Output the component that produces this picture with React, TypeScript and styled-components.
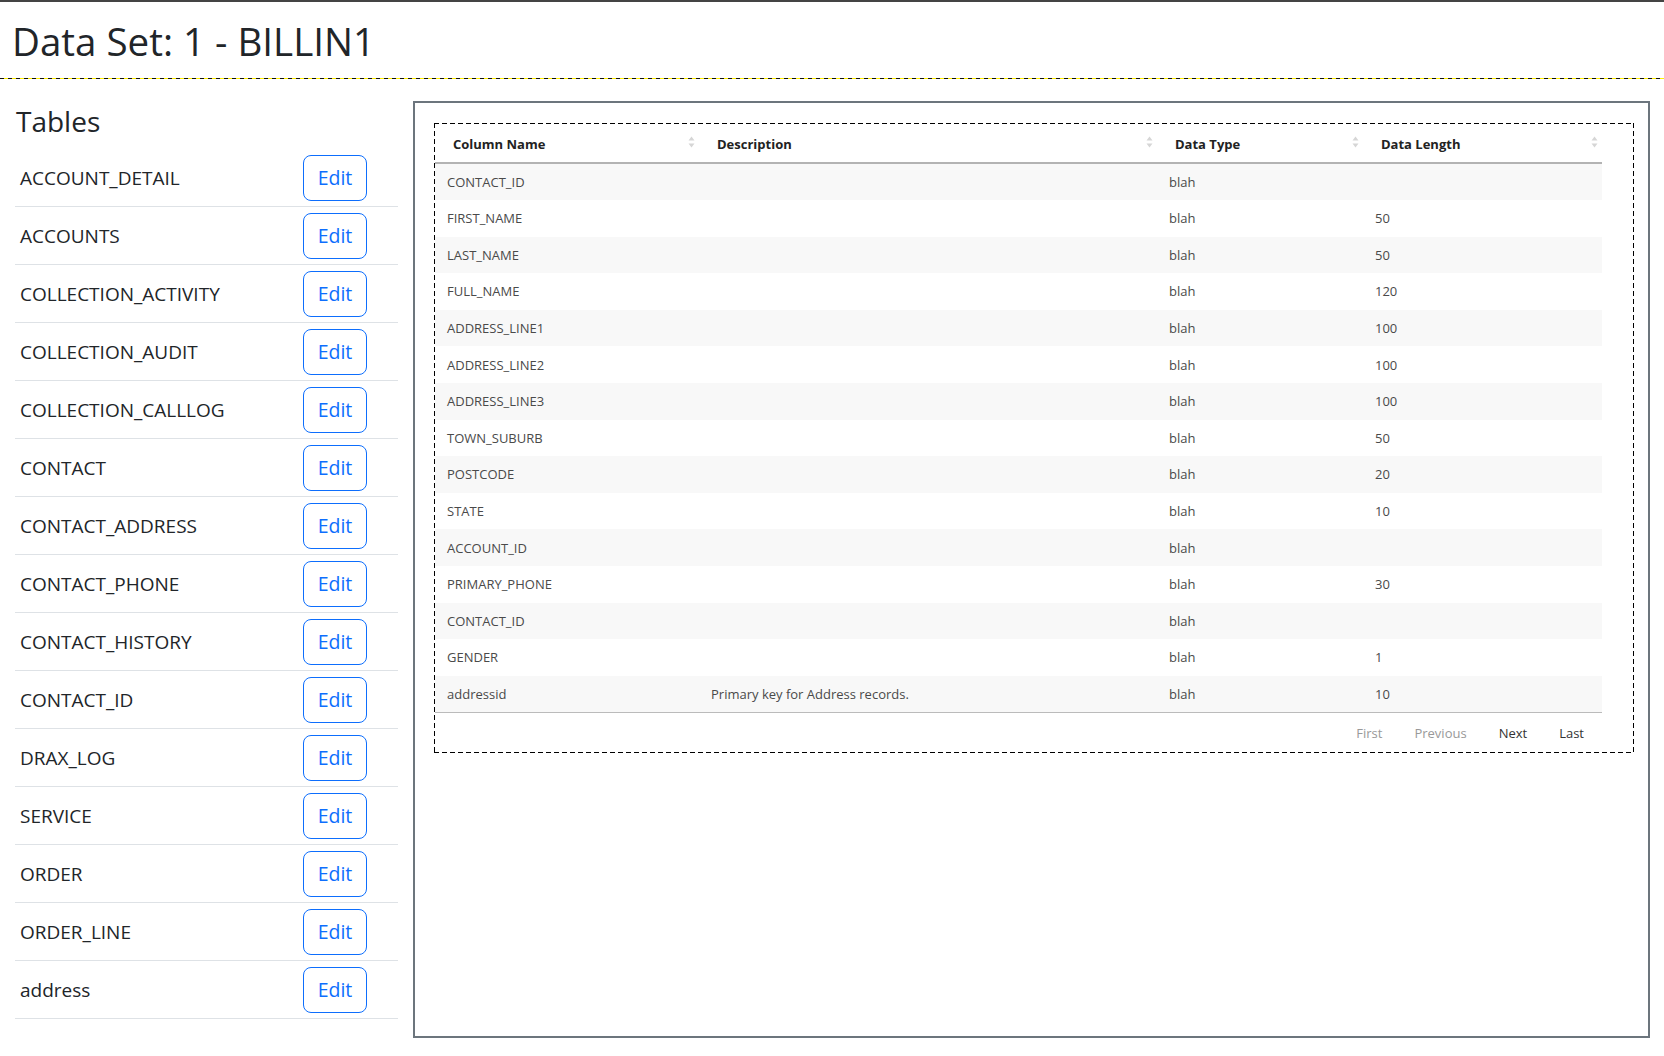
import React from 'react'
import styled, { createGlobalStyle } from 'styled-components'

const GlobalStyle = createGlobalStyle`
  html, body {
    margin: 0;
    padding: 0;
    background: #fff;
  }
  body {
    font-family: "Open Sans", "Noto Sans", sans-serif;
    color: #212529;
  }
  * {
    box-sizing: border-box;
  }
`

const tables = [
  'ACCOUNT_DETAIL',
  'ACCOUNTS',
  'COLLECTION_ACTIVITY',
  'COLLECTION_AUDIT',
  'COLLECTION_CALLLOG',
  'CONTACT',
  'CONTACT_ADDRESS',
  'CONTACT_PHONE',
  'CONTACT_HISTORY',
  'CONTACT_ID',
  'DRAX_LOG',
  'SERVICE',
  'ORDER',
  'ORDER_LINE',
  'address',
]

type Column = { name: string; description: string; type: string; length: string }

const columns: Column[] = [
  { name: 'CONTACT_ID', description: '', type: 'blah', length: '' },
  { name: 'FIRST_NAME', description: '', type: 'blah', length: '50' },
  { name: 'LAST_NAME', description: '', type: 'blah', length: '50' },
  { name: 'FULL_NAME', description: '', type: 'blah', length: '120' },
  { name: 'ADDRESS_LINE1', description: '', type: 'blah', length: '100' },
  { name: 'ADDRESS_LINE2', description: '', type: 'blah', length: '100' },
  { name: 'ADDRESS_LINE3', description: '', type: 'blah', length: '100' },
  { name: 'TOWN_SUBURB', description: '', type: 'blah', length: '50' },
  { name: 'POSTCODE', description: '', type: 'blah', length: '20' },
  { name: 'STATE', description: '', type: 'blah', length: '10' },
  { name: 'ACCOUNT_ID', description: '', type: 'blah', length: '' },
  { name: 'PRIMARY_PHONE', description: '', type: 'blah', length: '30' },
  { name: 'CONTACT_ID', description: '', type: 'blah', length: '' },
  { name: 'GENDER', description: '', type: 'blah', length: '1' },
  { name: 'addressid', description: 'Primary key for Address records.', type: 'blah', length: '10' },
]

const headers = [
  { label: 'Column Name', width: 264 },
  { label: 'Description', width: 458 },
  { label: 'Data Type', width: 206 },
  { label: 'Data Length', width: 239 },
]

const SortIcon = () => (
  <SortSvg width="7" height="12" viewBox="0 0 7 12">
    <path d="M3.5 0.5 L6.5 4.5 L0.5 4.5 Z" fill="#d6d6d6" />
    <path d="M3.5 11.5 L6.5 7.5 L0.5 7.5 Z" fill="#d6d6d6" />
  </SortSvg>
)

const App = () => {
  return (
    <>
      <GlobalStyle />
      <Page>
        <Header>
          <Title>Data Set: 1 - BILLIN1</Title>
        </Header>
        <Divider />
        <Main>
          <Sidebar>
            <SideTitle>Tables</SideTitle>
            <TableList>
              {tables.map((t) => (
                <TableRow key={t}>
                  <TableName>{t}</TableName>
                  <EditButton>Edit</EditButton>
                </TableRow>
              ))}
            </TableList>
          </Sidebar>
          <Panel>
            <DataBox>
              <Grid>
                <colgroup>
                  {headers.map((h) => (
                    <col key={h.label} style={{ width: h.width }} />
                  ))}
                </colgroup>
                <thead>
                  <tr>
                    {headers.map((h) => (
                      <Th key={h.label}>
                        {h.label}
                        <SortIcon />
                      </Th>
                    ))}
                  </tr>
                </thead>
                <tbody>
                  {columns.map((c, i) => (
                    <Tr key={i} striped={i % 2 === 0}>
                      <Td>{c.name}</Td>
                      <Td>{c.description}</Td>
                      <Td>{c.type}</Td>
                      <Td>{c.length}</Td>
                    </Tr>
                  ))}
                </tbody>
              </Grid>
              <Paging>
                <PageButton disabled>First</PageButton>
                <PageButton disabled>Previous</PageButton>
                <PageButton>Next</PageButton>
                <PageButton>Last</PageButton>
              </Paging>
            </DataBox>
          </Panel>
        </Main>
      </Page>
    </>
  )
}

export default App

const Page = styled.div`
  width: 1664px;
  min-height: 1056px;
  border-top: 2px solid #444;
`

const Header = styled.div`
  padding: 15px 12px 13px;
`

const Title = styled.h1`
  margin: 0;
  font-family: "Open Sans", "Noto Sans", sans-serif;
  font-weight: 400;
  font-size: 38.5px;
  line-height: 48px;
  color: #212529;
`

const Divider = styled.div`
  height: 1px;
  background: repeating-linear-gradient(90deg, #111 0 4px, #ffee00 4px 8px);
`

const Main = styled.div`
  display: flex;
  align-items: flex-start;
  gap: 15px;
  padding: 22px 15px 0;
`

const Sidebar = styled.div`
  width: 383px;
  flex-shrink: 0;
`

const SideTitle = styled.h3`
  margin: 3px 0 11px 1px;
  font-weight: 400;
  font-size: 28px;
  line-height: 34px;
  color: #212529;
`

const TableList = styled.div`
  display: flex;
  flex-direction: column;
`

const TableRow = styled.div`
  display: flex;
  align-items: center;
  justify-content: space-between;
  height: 58px;
  padding: 0 31px 0 5px;
  border-bottom: 1px solid #dee2e6;
`

const TableName = styled.span`
  font-size: 19px;
  color: #212529;
`

const EditButton = styled.button`
  width: 64px;
  height: 46px;
  padding: 0;
  border: 1px solid #0d6efd;
  border-radius: 8px;
  background: #fff;
  color: #0d6efd;
  font-family: "Open Sans", "Noto Sans", sans-serif;
  font-size: 19.5px;
  cursor: pointer;
`

const Panel = styled.div`
  flex: 1;
  height: 937px;
  border: 2px solid #6c757d;
  padding: 20px 14px 0 19px;
`

const dash = (dir: string) => `repeating-linear-gradient(${dir}, #000 0 5px, transparent 5px 8px)`

const DataBox = styled.div`
  padding: 3px 32px 1px 1px;
  background:
    ${dash('90deg')} top left / 100% 1px no-repeat,
    ${dash('90deg')} bottom left / 100% 1px no-repeat,
    ${dash('180deg')} top left / 1px 100% no-repeat,
    ${dash('180deg')} top right / 1px 100% no-repeat;
`

const Grid = styled.table`
  width: 100%;
  border-collapse: collapse;
  table-layout: fixed;
  font-family: "Open Sans", "Noto Sans", sans-serif;
  font-size: 13px;
  border-bottom: 1px solid #bbb;
`

const Th = styled.th`
  position: relative;
  text-align: left;
  padding: 9px 18px 9px 18px;
  height: 35px;
  font-weight: 700;
  color: #222;
  border-bottom: 2px solid #b3b3b3;
`

const SortSvg = styled.svg`
  position: absolute;
  right: 4px;
  top: 10px;
`

const Tr = styled.tr<{ striped?: boolean }>`
  background: ${({ striped }) => (striped ? '#f8f8f8' : '#fff')};
  & + & td {
    border-top: 1px solid #ececec;
  }
`

const Td = styled.td`
  padding: 10px 12px;
  height: 36.6px;
  color: #4a4a4a;
  line-height: 16px;
`

const Paging = styled.div`
  display: flex;
  justify-content: flex-end;
  padding: 5px 4px 3px 0;
`

const PageButton = styled.span<{ disabled?: boolean }>`
  padding: 6px 14px;
  margin-left: 4px;
  font-family: "Open Sans", "Noto Sans", sans-serif;
  font-size: 13px;
  line-height: 19px;
  color: ${({ disabled }) => (disabled ? '#999' : '#333')};
  cursor: ${({ disabled }) => (disabled ? 'default' : 'pointer')};
`
